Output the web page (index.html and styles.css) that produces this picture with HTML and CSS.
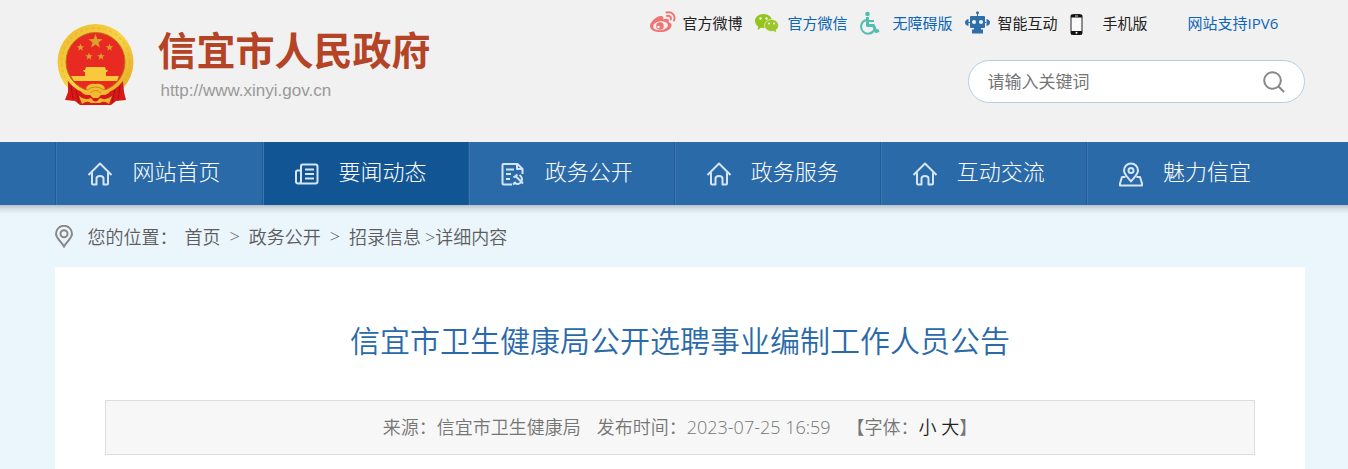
FILE: index.html
```html
<!DOCTYPE html>
<html lang="zh-CN">
<head>
  <meta charset="UTF-8" />
  <title>信宜市卫生健康局公开选聘事业编制工作人员公告</title>
  <link rel="stylesheet" href="styles.css">
</head>
<body>

  <!-- shared icons -->
  <svg class="sprite" aria-hidden="true">
    <symbol id="icon-home" viewBox="0 0 26 26">
      <path d="M1.500 14 L13 2.500 L24.500 14 M5 11.500 V22.500 Q5 23.500 6 23.500 H9.500 V17.500 Q9.500 15 13 15 Q16.500 15 16.500 17.500 V23.500 H20 Q21 23.500 21 22.500 V11.500" />
    </symbol>
    <symbol id="star" viewBox="-10 -10 20 20">
      <path d="M0 -10 L2.400 -3.200 L9.500 -3.100 L3.800 1.200 L5.900 8.100 L0 4 L-5.900 8.100 L-3.800 1.200 L-9.500 -3.100 L-2.400 -3.200 Z" />
    </symbol>
  </svg>

  <header class="header">
    <div class="wrap header-inner">
      <a class="logo" href="#">
        <svg class="emblem" viewBox="0 0 77 82" aria-hidden="true">
          <defs>
            <linearGradient id="gold" x1="0" y1="0" x2="1" y2="1">
              <stop offset="0" stop-color="#edb92c" />
              <stop offset="0.5" stop-color="#f8d447" />
              <stop offset="1" stop-color="#e2a11e" />
            </linearGradient>
          </defs>
          <circle cx="38.500" cy="38" r="38" fill="url(#gold)" />
          <circle cx="38.500" cy="38" r="34" fill="none" stroke="#e5aa26" stroke-width="2" stroke-dasharray="3 3" opacity="0.4" />
          <circle cx="38.500" cy="38" r="29.500" fill="#e92a22" stroke="#bd7416" stroke-width="1" />
          <path fill="#d71a18" d="M11 57 Q20 69 32 69 H45 Q57 69 66 57 L67 68 L69 76 L59 77 L54 81 H23 L18 77 L8 76 L11 68 Z" />
          <path fill="none" stroke="#a90f12" d="M14 62 L16 75 M19 66 L22 79 M63 62 L61 75 M58 66 L55 79" />
          <g fill="#d9a32c">
            <use href="#star" x="31" y="10" width="15" height="15" />
            <use href="#star" x="19.500" y="19.500" width="8" height="8" />
            <use href="#star" x="48.500" y="19.500" width="8" height="8" />
            <use href="#star" x="28" y="28.500" width="8" height="8" />
            <use href="#star" x="40" y="28.500" width="8" height="8" />
          </g>
          <path fill="#f8c93b" d="M29 43 H48 L49 46 H28 Z M26 46 H51 L50 48 H49 V52 H62 L60 57 H17 L14 52 H28 V48 H27 Z" />
          <path fill="#f3bb32" d="M30 66 L29 64 Q32 59 38.500 60 Q45 59 48 64 L47 66 Q52 67 55 64 Q52 72 44 71 L41 74 H36 L33 71 Q25 72 22 64 Q25 67 30 66 Z" />
          <path fill="#f0b52e" d="M22 72 Q28 77 34 74 Q38.500 81 43 74 Q49 77 55 72 L52 80 Q47 76 43 79 H34 Q30 76 25 80 Z" />
          <path fill="none" stroke="#cf8a1c" d="M30 66 Q38.500 60 47 66 M33 69 Q38.500 64 44 69" />
        </svg>
        <span class="logo-text">
          <strong class="site-name">信宜市人民政府</strong>
          <span class="site-url">http://www.xinyi.gov.cn</span>
        </span>
      </a>

      <div class="tools">
        <ul class="quick-links">
          <li><a href="#">
            <svg class="quick-icon" viewBox="0 0 26 24" aria-hidden="true">
              <path fill="#ee7672" d="M11 5 C13 5 14 6 13.300 8.500 C17 7 20 8 18.500 11 C21 12 22 13 21.500 15 C20.500 19 15.500 21 10.500 21 C5 21 0 19 0 15 C0 11 7 4.500 11 5 Z" />
              <ellipse cx="10.500" cy="14.800" rx="7.500" ry="4.500" fill="#f8eded" transform="rotate(-7 10.500 14.800)" />
              <circle cx="10" cy="15" r="3.800" fill="#ee7672" />
              <circle cx="8.500" cy="16" r="1.200" fill="#fff" />
              <path fill="none" stroke="#ee7672" stroke-width="2" stroke-linecap="round" d="M16.500 1.500 C21.500 0 26 4 24 9.500 M17 5 C19.500 4.200 21.500 6.200 20.700 8.500" />
            </svg>
            官方微博</a></li>
          <li><a class="blue" href="#">
            <svg class="quick-icon" viewBox="0 0 26 24" aria-hidden="true">
              <path fill="#93c41c" d="M8.500 3 C13.300 3 17 6 17 10 C17 14 13.300 17 8.500 17 L6 16.700 L2.500 19 L3.200 15.500 C1.200 14.200 0 12.200 0 10 C0 6 3.700 3 8.500 3 Z" />
              <path fill="#9dc62b" stroke="#f1f1f1" stroke-width="0.700" d="M16.500 8.500 C20.500 8.500 23.500 11.200 23.500 14.500 C23.500 16.500 22.500 18 21 19.200 L21.500 22 L18.500 20.300 C13.500 21 9.500 18.500 9.500 14.500 C9.500 11.200 12.500 8.500 16.500 8.500 Z" />
              <g fill="#f1f1f1"><circle cx="5.500" cy="7.500" r="1.200" /><circle cx="11.500" cy="7.500" r="1.200" /><circle cx="14" cy="12.500" r="1" /><circle cx="19" cy="12.500" r="1" /></g>
            </svg>
            官方微信</a></li>
          <li><a class="blue" href="#">
            <svg class="quick-icon" viewBox="0 0 26 24" aria-hidden="true">
              <circle cx="7.500" cy="3" r="2.300" fill="#51bfae" />
              <path fill="none" stroke="#51bfae" stroke-width="3" stroke-linejoin="round" d="M7.500 6 V14.500 H13.500 L16 20.500 L19 19.500" />
              <path fill="none" stroke="#51bfae" stroke-width="2" d="M7.500 10 H14 M6 9 A7 7 0 1 0 14.500 18.500" />
            </svg>
            无障碍版</a></li>
          <li><a href="#">
            <svg class="quick-icon" viewBox="0 0 26 24" aria-hidden="true">
              <g fill="#2f6fa9">
                <circle cx="12.500" cy="1.800" r="1.500" /><rect x="12" y="2" width="1" height="4" />
                <rect x="5" y="5" width="15" height="12" rx="1" />
                <path d="M3.500 8 V15 Q0 14 0 11.500 Q0 9 3.500 8 Z M21.500 8 V15 Q25 14 25 11.500 Q25 9 21.500 8 Z M3 11 H22 V12 H3 Z M9 16 H16 V19 H9 Z M7 18.500 H18 V22.500 H7 Z" />
              </g>
              <g fill="#f1f1f1"><circle cx="9" cy="11" r="2" /><circle cx="16" cy="11" r="2" /></g>
            </svg>
            智能互动</a></li>
          <li><a href="#">
            <svg class="quick-icon" viewBox="0 0 26 24" aria-hidden="true">
              <rect x="1" y="3.500" width="11" height="20" rx="1.500" fill="#fafafa" stroke="#222" />
              <path fill="#111" d="M1 4 H12 V6.500 H1 Z M1 20 H12 V23.500 H1 Z" />
              <circle cx="6.500" cy="21.800" r="1" fill="#fff" /><path stroke="#ccc" d="M5 5 H8" />
            </svg>
            手机版</a></li>
          <li class="ipv6"><a class="blue" href="#">网站支持IPV6</a></li>
        </ul>

        <form class="search">
          <input type="text" placeholder="请输入关键词" aria-label="请输入关键词">
          <button type="button" aria-label="搜索">
            <svg viewBox="0 0 22 22" aria-hidden="true"><circle cx="9.500" cy="9.500" r="8.300" /><path d="M15.500 15.500 L21 21" /></svg>
          </button>
        </form>
      </div>
    </div>
  </header>

  <nav class="nav">
    <div class="wrap">
      <ul class="nav-list">
        <li><a href="#"><svg aria-hidden="true"><use href="#icon-home" /></svg><span>网站首页</span></a></li>
        <li><a class="active" href="#">
          <svg viewBox="0 0 26 26" aria-hidden="true"><path d="M7 5 Q7 3.500 8.500 3.500 H21.500 Q23.500 3.500 23.500 5.500 V20.500 Q23.500 22.500 21.500 22.500 H4 Q2 22.500 2 20.500 V11 Q2 9.500 3.500 9.500 H7 M7 5 V20 Q7 22.500 4.500 22.500 M11 8.500 H20 M11 13 H20 M11 17.500 H20" /></svg>
          <span>要闻动态</span></a></li>
        <li><a href="#">
          <svg viewBox="0 0 26 26" aria-hidden="true"><path d="M12 23.500 H3.500 Q2.500 23.500 2.500 22.500 V4 Q2.500 3 3.500 3 H17.500 L22.500 8 V13 M17 3 V8 H22 M6 8.500 H14 M6 13 H11 M6 18 H10" /><path d="M13.500 16.500 L17.500 13.500 M15.500 15 L23 22.500 M13.500 21.500 Q18.500 25 21.500 20.500 Q23 16.500 19.500 14 M13 23.500 L16 21" /></svg>
          <span>政务公开</span></a></li>
        <li><a href="#"><svg aria-hidden="true"><use href="#icon-home" /></svg><span>政务服务</span></a></li>
        <li><a href="#"><svg aria-hidden="true"><use href="#icon-home" /></svg><span>互动交流</span></a></li>
        <li><a href="#">
          <svg viewBox="0 0 26 26" aria-hidden="true"><path d="M13 20.500 C9 15.500 6 13 6 9.500 A7 7 0 0 1 20 9.500 C20 13 17 15.500 13 20.500 Z M7.500 16 H4 L2 22.500 V24.500 H24 V22.500 L22 16 H18.500" /><circle cx="13" cy="9.500" r="2.500" /></svg>
          <span>魅力信宜</span></a></li>
      </ul>
    </div>
  </nav>

  <main class="main">
    <div class="wrap">
      <div class="crumbs">
        <svg viewBox="0 0 18 23" aria-hidden="true"><path d="M9 21.500 C6 16.500 1 13 1 8.800 A8 8 0 0 1 17 8.800 C17 13 12 16.500 9 21.500 Z" /><circle cx="9" cy="8.800" r="3.500" /></svg>
        <span class="crumbs-label">您的位置：</span>
        <a href="#">首页</a>
        <span class="sep">&gt;</span>
        <a href="#">政务公开</a>
        <span class="sep">&gt;</span>
        <a href="#">招录信息</a>
        <span class="current">&gt;详细内容</span>
      </div>

      <article class="article">
        <h1>信宜市卫生健康局公开选聘事业编制工作人员公告</h1>
        <div class="meta">
          <span>来源：信宜市卫生健康局</span>
          <span>发布时间：2023-07-25 16:59</span>
          <span>【字体：<button type="button">小</button> <button type="button">大</button>】</span>
        </div>
      </article>
    </div>
  </main>

</body>
</html>
```
FILE: styles.css
```css
* {
    box-sizing: border-box;
}

body {
    margin: 0;
    font-family: "Open Sans", "Noto Sans CJK SC", sans-serif;
    font-size: 18px;
    color: #5c5c5c;
    background-color: #eaf5fc;
}

a {
    color: inherit;
    text-decoration: none;
}

ul {
    margin: 0;
    padding: 0;
    list-style: none;
}

.sprite {
    display: none;
}

.header, .nav, .main {
    padding-left: 12px;
}

.wrap {
    width: 93.5%;
    max-width: 1250px;
    margin: 0 auto;
}

/* header */
.header {
    background-color: #f1f1f1;
}

.header-inner {
    display: flex;
    justify-content: space-between;
    min-height: 142px;
}

.logo {
    display: flex;
    align-items: flex-start;
    gap: 23px;
    padding: 24px 0 0 2px;
}

.emblem {
    width: 77px;
    height: 82px;
}

.logo-text {
    display: flex;
    flex-direction: column;
}

.site-name {
    font-size: 39px;
    line-height: 52px;
    font-weight: 700;
    color: #b54326;
}

.site-url {
    padding-left: 3px;
    font-family: "Liberation Sans", sans-serif;
    font-size: 17px;
    line-height: 30px;
    color: #999;
}

.tools {
    display: flex;
    flex-direction: column;
    align-items: flex-end;
    padding-top: 11px;
}

.quick-links {
    display: flex;
    font-size: 15px;
    line-height: 24px;
    color: #222;
}

.quick-links li {
    width: 105px;
    white-space: nowrap;
}

.quick-links a {
    display: flex;
    align-items: center;
    gap: 7px;
}

.quick-links .blue {
    color: #0d65b5;
}

.quick-links .ipv6 {
    width: 130px;
    padding-left: 13px;
}

.quick-icon {
    width: 26px;
    height: 24px;
}

.search {
    display: flex;
    align-items: center;
    width: 337px;
    height: 43px;
    margin-top: 25px;
    padding: 0 19px;
    border: 1px solid #b9cce4;
    border-radius: 22px;
    background-color: #fff;
}

.search input {
    flex: 1;
    min-width: 0;
    padding: 0;
    border: 0;
    outline: 0;
    background: none;
    font-family: inherit;
    font-size: 17px;
    color: #666;
}

.search input::placeholder {
    color: #757575;
}

.search button {
    display: flex;
    padding: 0;
    border: 0;
    background: none;
    cursor: pointer;
}

.search svg {
    width: 22px;
    height: 22px;
    fill: none;
    stroke: #888;
    stroke-width: 2;
}

/* nav */
.nav {
    background-color: #2a6aa8;
}

.nav-list {
    display: flex;
}

.nav-list li {
    width: 16.5%;
    border-left: 1px solid #215c98;
}

.nav-list a {
    display: flex;
    align-items: center;
    gap: 19px;
    height: 63px;
    padding-left: 30px;
    border-left: 1px solid #3a76b0;
    font-size: 22px;
    font-weight: 300;
    color: #fff;
    white-space: nowrap;
}

.nav-list a.active {
    background-color: #125594;
}

.nav-list span {
    padding-bottom: 8px;
}

.nav-list svg {
    width: 26px;
    height: 26px;
    fill: none;
    stroke: #d5e5f4;
    stroke-width: 2;
    stroke-linejoin: round;
}

/* breadcrumb */
.main {
    background: linear-gradient(#b9c2c8, #d6e0e6 4px, #eaf5fc 9px);
}

.crumbs {
    display: flex;
    align-items: center;
    height: 62px;
    font-weight: 350;
}

.crumbs svg {
    width: 18px;
    height: 23px;
    margin-right: 14px;
    fill: none;
    stroke: #888;
    stroke-width: 2;
}

.crumbs-label {
    margin-right: 7px;
}

.sep {
    margin: 0 9px;
}

.current {
    margin-left: 4px;
}

/* article */
.article {
    padding: 50px 50px 14px;
    background-color: #fff;
}

.article h1 {
    margin: 0 0 36px;
    font-size: 30px;
    line-height: 47px;
    font-weight: 350;
    text-align: center;
    color: #2a6aa8;
}

.meta {
    display: flex;
    justify-content: center;
    gap: 16px;
    padding: 14px 0;
    border: 1px solid #ddd;
    background-color: #f7f7f7;
    line-height: 25px;
    font-weight: 350;
    color: #757575;
}

.meta button {
    padding: 0;
    border: 0;
    background: none;
    font: inherit;
    color: #222;
    cursor: pointer;
}
```
